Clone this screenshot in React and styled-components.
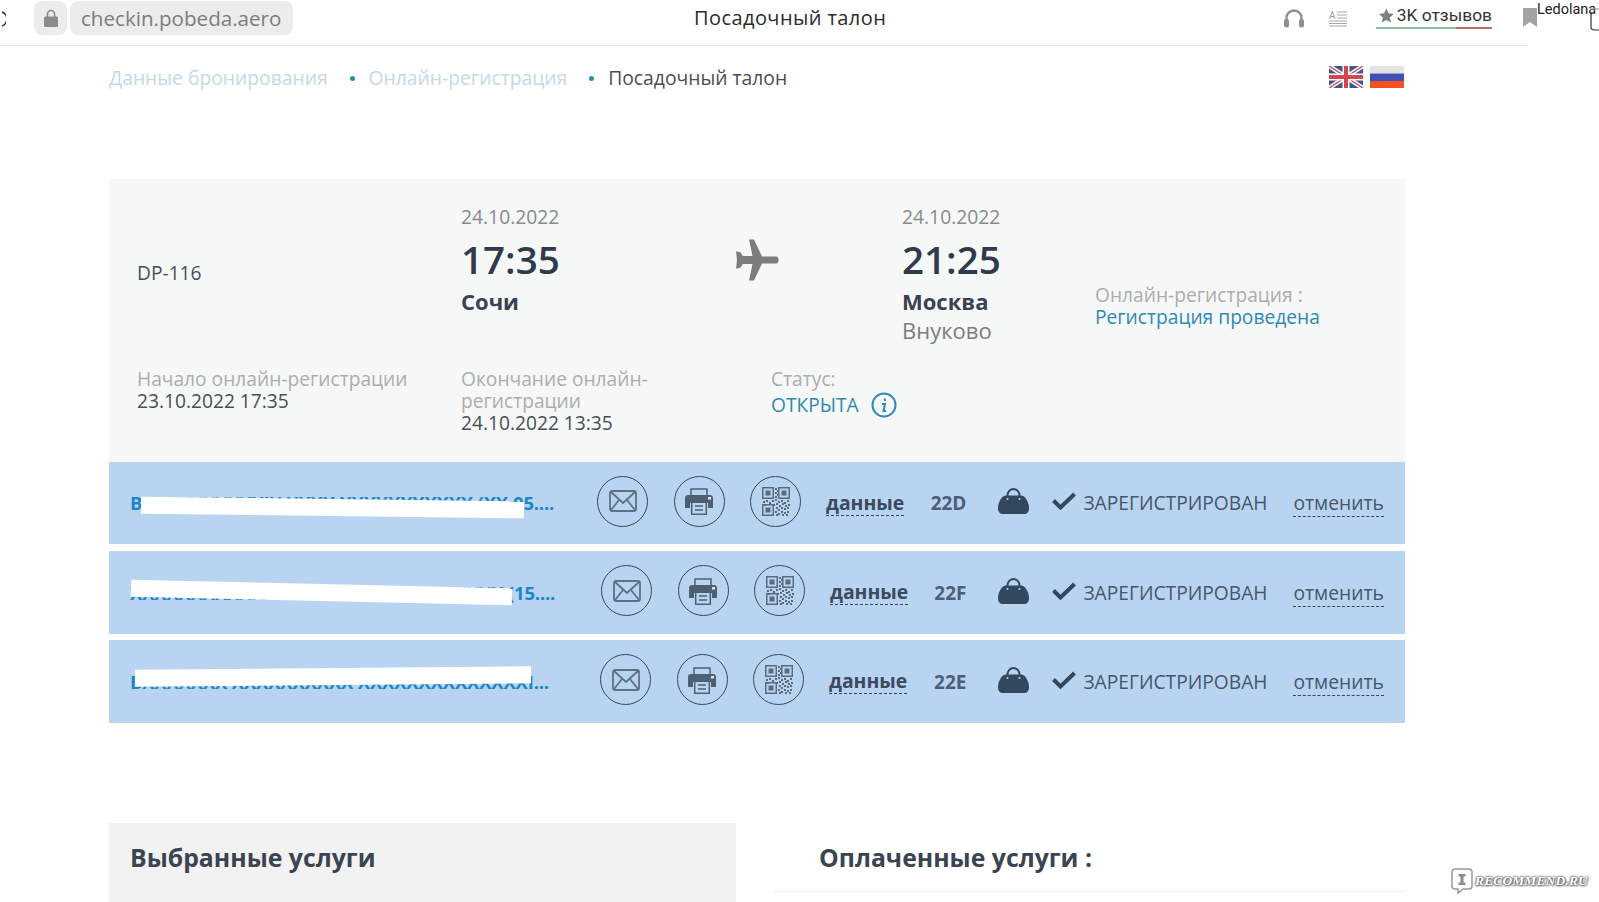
import React from "react";
import styled, { createGlobalStyle } from "styled-components";

const Global = createGlobalStyle`
  html, body { margin: 0; padding: 0; background: #fff; }
  body { font-family: "Open Sans", "Noto Sans", sans-serif; overflow: hidden; }
  * { box-sizing: border-box; }
`;

const Page = styled.div`
  position: relative;
  width: 1599px;
  height: 902px;
  overflow: hidden;
  background: #fff;
`;

const TopBar = styled.header`
  position: relative;
  display: flex;
  align-items: flex-start;
  width: 1528px;
  height: 46px;
  border-bottom: 1px solid #e7e7e7;
`;
const Reload = styled.svg`
  width: 12px;
  height: 20px;
  margin: 9px 0 0 -6px;
  flex: none;
`;
const LockPill = styled.div`
  width: 33px;
  height: 34px;
  margin: 1px 0 0 28px;
  border-radius: 8px;
  background: #ececec;
  display: flex;
  align-items: center;
  justify-content: center;
  flex: none;
`;
const UrlPill = styled.div`
  width: 223px;
  height: 34px;
  margin: 1px 0 0 3px;
  border-radius: 8px;
  background: #ececec;
  color: #7d7d7d;
  font-size: 20.6px;
  line-height: 34px;
  padding-left: 11px;
  white-space: nowrap;
  flex: none;
`;
const PageTitle = styled.div`
  margin: 4px 0 0 401px;
  width: 500px;
  color: #2b2b2b;
  font-size: 20px;
  line-height: 28px;
  white-space: nowrap;
  letter-spacing: 0.42px;
  flex: none;
`;
const BarIcon = styled.svg`
  flex: none;
  margin-top: ${p => p.$top}px;
  margin-left: ${p => p.$left}px;
`;
const Reviews = styled.div`
  margin: 3px 0 0 29px;
  width: 116px;
  height: 26px;
  display: flex;
  align-items: center;
  gap: 3px;
  color: #333;
  font-family: "Roboto", sans-serif;
  font-size: 17.4px;
  white-space: nowrap;
  padding-left: 3px;
  border-bottom: 2px solid;
  border-image: linear-gradient(90deg, #8dbb9d 0 69%, #b4726b 69% 100%) 1;
  flex: none;
`;
const UserName = styled.div`
  position: absolute;
  left: 1537px;
  top: 0;
  color: #222;
  font-family: "Roboto", sans-serif;
  font-size: 14.5px;
  line-height: 20px;
  white-space: nowrap;
`;
const CursorMark = styled.svg`
  position: absolute;
  left: 1590px;
  top: 8px;
`;

const Container = styled.main`
  width: 1296px;
  margin-left: 109px;
`;
const CrumbRow = styled.nav`
  display: flex;
  align-items: flex-start;
  height: 133px;
  padding-top: 19px;
  font-size: 19.3px;
  line-height: 26px;
`;
const Crumb = styled.span`
  color: ${p => (p.$active ? "#4a4f55" : "#c4d8e8")};
  white-space: nowrap;
`;
const CrumbDot = styled.span`
  width: 5px;
  height: 5px;
  margin: 11px ${p => p.$after}px 0 ${p => p.$before}px;
  border-radius: 50%;
  background: #2f8fa8;
  flex: none;
`;
const Flags = styled.div`
  margin-left: auto;
  margin-right: 1px;
  display: flex;
  gap: 7px;
  padding-top: 1px;
`;

const FlightPanel = styled.section`
  height: 283px;
  background: #f6f8f8;
  padding: 26px 0 0 28px;
`;
const RouteGrid = styled.div`
  display: grid;
  grid-template-columns: 324px 274px 167px 193px 1fr;
  height: 163px;
`;
const MetaGrid = styled.div`
  display: grid;
  grid-template-columns: 324px 310px 1fr;
`;
const Cell = styled.div`
  padding-top: ${p => p.$top || 0}px;
`;
const DateText = styled.div`
  color: #8a8a8a;
  font-size: 19.3px;
  line-height: 24px;
`;
const TimeText = styled.div`
  color: #2f3b4b;
  font-size: 38.6px;
  font-weight: 600;
  line-height: 48px;
  margin-top: 6px;
`;
const City = styled.div`
  color: #39424f;
  font-size: 22px;
  font-weight: 700;
  line-height: 30px;
  margin-top: 3px;
`;
const Airport = styled.div`
  color: #7d7d7d;
  font-size: 22px;
  line-height: 28px;
`;
const FlightNo = styled.div`
  color: #4a4f55;
  font-size: 19.2px;
  line-height: 24px;
`;
const Label = styled.div`
  color: #adadad;
  font-size: 19.2px;
  line-height: 22px;
`;
const Value = styled.div`
  color: #4a4f55;
  font-size: 19.2px;
  line-height: 22px;
`;
const LinkText = styled.div`
  color: #2f88b5;
  font-size: 19.2px;
  line-height: 22px;
`;
const StatusLine = styled.div`
  display: flex;
  align-items: center;
  gap: 12px;
  margin-top: 2px;
  color: #2f88b5;
  font-size: 19.2px;
  line-height: 26px;
`;

const RowList = styled.div`
  display: flex;
  flex-direction: column;
`;
const Row = styled.div`
  position: relative;
  display: flex;
  align-items: center;
  height: ${p => p.$height}px;
  margin-top: ${p => p.$gap}px;
  padding: 0 21px 4px 21px;
  background: #b9d4f1;
`;
const NameCol = styled.div`
  width: ${p => p.$w}px;
  flex: none;
  color: #1a87c9;
  font-size: 18.5px;
  font-weight: 700;
  white-space: nowrap;
  line-height: 24px;
  letter-spacing: -0.2px;
  padding-top: 4px;
`;
const Redaction = styled.div`
  position: absolute;
  background: #fff;
  left: ${p => p.$left}px;
  top: ${p => p.$top}px;
  width: ${p => p.$width}px;
  height: 17px;
  transform: rotate(${p => p.$angle}deg);
`;
const Circles = styled.div`
  display: flex;
  gap: 25.5px;
  flex: none;
`;
const Circle = styled.div`
  width: 51px;
  height: 51px;
  border: 1px solid #33475f;
  border-radius: 50%;
  display: flex;
  align-items: center;
  justify-content: center;
`;
const DataLink = styled.span`
  margin: 4px 0 0 25px;
  color: #3b4a5d;
  font-size: 19.4px;
  font-weight: 700;
  line-height: 24px;
  border-bottom: 1px dashed #33475f;
  flex: none;
`;
const Seat = styled.span`
  flex: 1;
  margin-top: 4px;
  text-align: right;
  color: #4c5f78;
  font-size: 19px;
  font-weight: 700;
`;
const BagIcon = styled.svg`
  margin-left: 32px;
  flex: none;
`;
const CheckIcon = styled.svg`
  margin-left: 23px;
  flex: none;
`;
const StatusText = styled.span`
  margin: 3px 0 0 7px;
  color: #46566c;
  font-size: 19.2px;
  white-space: nowrap;
  flex: none;
`;
const CancelLink = styled.span`
  margin: 5px 0 0 26px;
  color: #46566c;
  font-size: 19.3px;
  line-height: 26px;
  border-bottom: 1px dashed #33475f;
  flex: none;
`;

const Services = styled.section`
  display: flex;
  margin-top: 100px;
  height: 79px;
`;
const ServicesPanel = styled.div`
  width: 627px;
  height: 79px;
  background: #f2f2f2;
  padding: 17px 0 0 21px;
  flex: none;
`;
const PaidPanel = styled.div`
  flex: 1;
  margin-left: 39px;
  height: 69px;
  padding: 17px 0 0 44px;
  border-bottom: 1px dotted #e0e0e0;
`;
const ServicesTitle = styled.h2`
  margin: 0;
  color: #3a4452;
  font-size: 24.8px;
  font-weight: 700;
  line-height: 34px;
  white-space: nowrap;
`;

const Watermark = styled.div`
  position: absolute;
  left: 1451px;
  top: 868px;
  display: flex;
  align-items: center;
  gap: 2px;
  color: #fff;
  font-family: "Liberation Serif", serif;
  font-size: 13.4px;
  font-weight: 700;
  font-style: italic;
  letter-spacing: 0.2px;
  text-shadow: 0 0 2px #666, 0 0 2px #666, 0 0 3px #777, 1px 1px 2px #777;
`;

const MailGlyph = () => (
  <svg width="28" height="22" viewBox="0 0 28 22" fill="none" stroke="#5e7084" strokeWidth="1.8">
    <rect x="1" y="1" width="26" height="20" rx="2" />
    <path d="M2 2l12 11L26 2M2 20l8-10M26 20l-8-10" />
  </svg>
);
const PrintGlyph = () => (
  <svg width="28" height="28" viewBox="0 0 28 28">
    <path d="M6 8V2h16v6" fill="none" stroke="#4f5f72" strokeWidth="1.5" />
    <path d="M3 8h22a3 3 0 0 1 3 3v10h-5v-5H5v5H0V11a3 3 0 0 1 3-3z" fill="#4f5f72" />
    <rect x="6.7" y="14.7" width="14.6" height="12.6" fill="none" stroke="#4f5f72" strokeWidth="1.5" />
    <path d="M10 19h8M10 23h8" stroke="#4f5f72" strokeWidth="1.5" />
    <rect x="23" y="10" width="3" height="2.5" fill="#dbe5f0" />
  </svg>
);
const QrFinder = ({ x, y }) => (
  <g>
    <rect x={x + 0.75} y={y + 0.75} width="10.5" height="10.5" fill="none" stroke="#5b6b7e" strokeWidth="1.5" />
    <rect x={x + 3.5} y={y + 3.5} width="5" height="5" fill="#5b6b7e" />
  </g>
);
const qrDots = [
  [13,1],[15,3],[13,5],[15,7],[13,9],[1,14],[4,13],[7,15],[10,13],[13,12],[16,14],[19,13],[22,15],[25,13],
  [2,17],[14,16],[17,18],[20,16],[23,18],[26,17],[14,20],[16,22],[19,20],[22,21],[25,20],[13,24],[16,26],[19,24],[22,25],[25,24],[14,27],[20,27],[24,27],[11,17]
];
const QrGlyph = () => (
  <svg width="28" height="29" viewBox="0 0 28 29">
    <QrFinder x={0} y={0} />
    <QrFinder x={16} y={0} />
    <QrFinder x={0} y={17} />
    {qrDots.map(([x, y]) => (
      <rect key={`${x}-${y}`} x={x} y={y} width="2" height="2" fill="#5b6b7e" />
    ))}
  </svg>
);
const Bag = () => (
  <BagIcon width="31" height="26" viewBox="0 0 31 26">
    <path d="M9.5 9.5V7.500a6 6.500 0 0 1 12 0v2" fill="none" stroke="#33475f" strokeWidth="2" />
    <path d="M8 7.500h15c4 0 8 6.500 8 12.500 0 4-2 6-5 6H5c-3 0-5-2-5-6C0 14 4 7.500 8 7.500z" fill="#33475f" />
    <circle cx="9.5" cy="11" r="1" fill="#b9d4f1" />
    <circle cx="21.5" cy="11" r="1" fill="#b9d4f1" />
  </BagIcon>
);
const Check = () => (
  <CheckIcon width="24" height="18" viewBox="0 0 24 18">
    <path d="M1.500 8.500l7 7L22.500 2" fill="none" stroke="#33475f" strokeWidth="4" />
  </CheckIcon>
);

const UkFlag = () => (
  <svg width="34" height="22" viewBox="0 0 34 22">
    <rect width="34" height="22" fill="#45558f" />
    <path d="M0 0l34 22M34 0L0 22" stroke="#fff" strokeWidth="4.4" />
    <path d="M0 0l34 22M34 0L0 22" stroke="#d3474e" strokeWidth="1.4" />
    <path d="M17 0v22M0 11h34" stroke="#fff" strokeWidth="7" />
    <path d="M17 0v22M0 11h34" stroke="#d3474e" strokeWidth="4" />
  </svg>
);
const RuFlag = () => (
  <svg width="34" height="22" viewBox="0 0 34 22">
    <rect width="34" height="7.5" fill="#e3e3e3" />
    <rect y="7.5" width="34" height="7.5" fill="#3f51b5" />
    <rect y="15" width="34" height="7" fill="#f4511e" />
  </svg>
);

const passengers = [
  { name: "BXXXXXXXXXXIX XXXX XXXXXXXXXXX (XX.05....", w: 467, seat: "22D", height: 82, top: 0,
    red: { left: 32, top: 37, width: 383, angle: 0.7 } },
  { name: "XXXXXXXXXXXX XXXXXXX XXXXXXXXXXX (15....", w: 471, seat: "22F", height: 83, top: 7,
    red: { left: 22, top: 33, width: 381, angle: 1.3 } },
  { name: "BXXXXXXX XXXXXXXXXX XXXXXXXXXXXXXXI...", w: 470, seat: "22E", height: 83, top: 6,
    red: { left: 26, top: 28, width: 396, angle: -0.5 } },
];

export default function App() {
  return (
    <Page>
      <Global />
      <TopBar>
        <Reload viewBox="0 0 12 20" fill="none" stroke="#333" strokeWidth="1.5">
          <path d="M8 3a7.500 7.500 0 0 1 0 14" />
        </Reload>
        <LockPill>
          <svg width="14" height="18" viewBox="0 0 14 18">
            <path d="M3.500 8V5a3.500 3.500 0 0 1 7 0v3" fill="none" stroke="#8a8a8a" strokeWidth="1.6" />
            <rect y="7.5" width="14" height="10.5" rx="1.5" fill="#8a8a8a" />
          </svg>
        </LockPill>
        <UrlPill>checkin.pobeda.aero</UrlPill>
        <PageTitle>Посадочный талон</PageTitle>
        <BarIcon $top={8} $left={90} width="20" height="20" viewBox="0 0 20 20">
          <path d="M2.500 14V10a7.500 7.500 0 0 1 15 0v4" fill="none" stroke="#8f8f8f" strokeWidth="2.4" />
          <rect x="0" y="11" width="5" height="8.5" rx="2" fill="#8f8f8f" />
          <rect x="15" y="11" width="5" height="8.5" rx="2" fill="#8f8f8f" />
        </BarIcon>
        <BarIcon $top={10} $left={25} width="18" height="17" viewBox="0 0 18 17">
          <text x="0" y="8.5" fontFamily="Roboto, sans-serif" fontSize="10" fill="#9a9a9a">A</text>
          <path d="M8 2h10M8 5h10M8 8h10M0 11h18M0 13.500h18M0 16h18" stroke="#a8a8a8" strokeWidth="1" />
        </BarIcon>
        <Reviews>
          <svg width="16" height="15" viewBox="0 0 24 23">
            <path d="M12 0l3.600 8 8.400.9-6.300 5.700 1.800 8.400L12 18.700 4.500 23l1.800-8.400L0 8.900 8.400 8z" fill="#7f7f7f" />
          </svg>
          3K отзывов
        </Reviews>
        <BarIcon $top={8} $left={31} width="14" height="19" viewBox="0 0 14 19">
          <path d="M0 0h14v19l-7-5-7 5z" fill="#a3a3a3" />
        </BarIcon>
        <UserName>Ledolana</UserName>
        <CursorMark width="9" height="24" viewBox="0 0 9 24" fill="none" stroke="#333" strokeWidth="1.2">
          <path d="M1 4v15c0 2 2 3 4 3h4" />
          <path d="M0 1h9" stroke="#999" />
        </CursorMark>
      </TopBar>

      <Container>
        <CrumbRow>
          <Crumb>Данные бронирования</Crumb>
          <CrumbDot $before={22} $after={14} />
          <Crumb>Онлайн-регистрация</Crumb>
          <CrumbDot $before={22} $after={14} />
          <Crumb $active>Посадочный талон</Crumb>
          <Flags>
            <UkFlag />
            <RuFlag />
          </Flags>
        </CrumbRow>

        <FlightPanel>
          <RouteGrid>
            <Cell $top={56}><FlightNo>DP-116</FlightNo></Cell>
            <Cell>
              <DateText>24.10.2022</DateText>
              <TimeText>17:35</TimeText>
              <City>Сочи</City>
            </Cell>
            <Cell $top={34}>
              <svg width="44" height="42" viewBox="0 0 44 42">
                <path d="M41 17.500C44.500 17.500 44.500 24.500 41 24.500L27 24.500L19 41.500L14 41.500L17.500 25L8 25L5 29L1 29.500L2 21L1 12.500L5 13L8 17L17.500 17L14 .5L19 .5L27 17.500Z" fill="#7a7e7e" />
              </svg>
            </Cell>
            <Cell>
              <DateText>24.10.2022</DateText>
              <TimeText>21:25</TimeText>
              <City>Москва</City>
              <Airport>Внуково</Airport>
            </Cell>
            <Cell $top={79}>
              <Label>Онлайн-регистрация :</Label>
              <LinkText>Регистрация проведена</LinkText>
            </Cell>
          </RouteGrid>
          <MetaGrid>
            <Cell>
              <Label>Начало онлайн-регистрации</Label>
              <Value>23.10.2022 17:35</Value>
            </Cell>
            <Cell>
              <Label>Окончание онлайн-<br />регистрации</Label>
              <Value>24.10.2022 13:35</Value>
            </Cell>
            <Cell>
              <Label>Статус:</Label>
              <StatusLine>
                ОТКРЫТА
                <svg width="26" height="26" viewBox="0 0 26 26">
                  <circle cx="13" cy="13" r="11.500" fill="none" stroke="#2f88b5" strokeWidth="2" />
                  <path d="M13.800 6.500v2.500M11 12h3l-1.500 7h2.500" fill="none" stroke="#2f88b5" strokeWidth="2" />
                </svg>
              </StatusLine>
            </Cell>
          </MetaGrid>
        </FlightPanel>

        <RowList>
          {passengers.map(p => (
            <Row key={p.seat} $height={p.height} $gap={p.top}>
              <NameCol $w={p.w}>{p.name}</NameCol>
              <Redaction $left={p.red.left} $top={p.red.top} $width={p.red.width} $angle={p.red.angle} />
              <Circles>
                <Circle><MailGlyph /></Circle>
                <Circle><PrintGlyph /></Circle>
                <Circle><QrGlyph /></Circle>
              </Circles>
              <DataLink>данные</DataLink>
              <Seat>{p.seat}</Seat>
              <Bag />
              <Check />
              <StatusText>ЗАРЕГИСТРИРОВАН</StatusText>
              <CancelLink>отменить</CancelLink>
            </Row>
          ))}
        </RowList>

        <Services>
          <ServicesPanel><ServicesTitle>Выбранные услуги</ServicesTitle></ServicesPanel>
          <PaidPanel><ServicesTitle>Оплаченные услуги :</ServicesTitle></PaidPanel>
        </Services>
      </Container>

      <Watermark>
        <svg width="22" height="26" viewBox="0 0 22 26">
          <path d="M4 1h14a3 3 0 0 1 3 3v14a3 3 0 0 1-3 3h-6l-5 4v-4H4a3 3 0 0 1-3-3V4a3 3 0 0 1 3-3z" fill="#fff" stroke="#999" strokeWidth="1.5" />
          <path d="M7.500 6h7v2.500h-2v6h2V17h-7v-2.500h2v-6h-2z" fill="#8a8a8a" />
        </svg>
        RECOMMEND.RU
      </Watermark>
    </Page>
  );
}
